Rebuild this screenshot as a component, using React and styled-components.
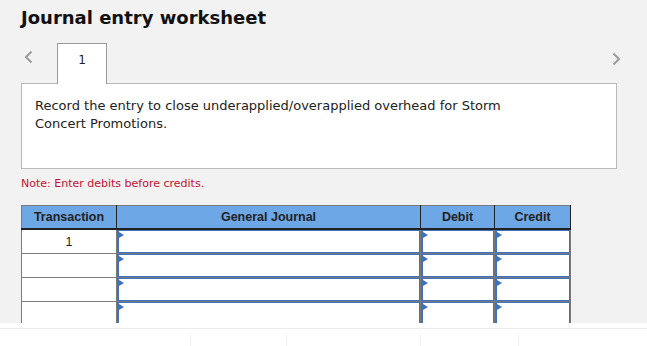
import React from "react";
import styled, { createGlobalStyle } from "styled-components";

const Global = createGlobalStyle`
  html, body { margin: 0; padding: 0; background: #ffffff; }
  body { font-family: "DejaVu Sans", Verdana, sans-serif; color: #222; }
`;

const Page = styled.div`
  width: 647px;
  height: 346px;
  display: flex;
  flex-direction: column;
  overflow: hidden;
`;

const Main = styled.div`
  height: 323px;
  flex: none;
  background: #f2f2f2;
  overflow: hidden;
`;

const Title = styled.h1`
  margin: 0;
  padding: 6px 0 0 21px;
  font-family: "DejaVu Sans", Verdana, sans-serif;
  font-weight: bold;
  font-size: 18px;
  line-height: 23px;
  color: #111;
`;

const TabRow = styled.div`
  display: flex;
  align-items: flex-start;
  margin-top: 14px;
  padding-left: 21px;
  position: relative;
  z-index: 1;
`;

const ArrowButton = styled.div`
  display: flex;
  align-items: flex-start;
  padding-top: ${(p) => p.$top}px;
  width: ${(p) => p.$width}px;
  padding-left: ${(p) => p.$left}px;
  box-sizing: border-box;
  margin-right: ${(p) => p.$right || 0}px;
`;

const Spacer = styled.div`
  flex: 1;
`;

const Tab = styled.div`
  width: 50px;
  height: 41px;
  box-sizing: border-box;
  border: 1px solid #9a9a9a;
  border-bottom: none;
  background: #fff;
  font-family: "DejaVu Sans", Verdana, sans-serif;
  font-size: 12px;
  text-align: center;
  padding-top: 9px;
  color: #222;
  margin-bottom: -1px;
`;

const Panel = styled.div`
  margin: 0 0 0 21px;
  width: 596px;
  height: 86px;
  box-sizing: border-box;
  border: 1px solid #b9b9b9;
  background: #fff;
  padding: 13px 0 0 13px;
`;

const Prompt = styled.p`
  margin: 0;
  max-width: 500px;
  font-family: "DejaVu Sans", Verdana, sans-serif;
  font-size: 13px;
  line-height: 18px;
  color: #222;
`;

const Note = styled.p`
  margin: 8px 0 0 21px;
  font-family: "DejaVu Sans", Verdana, sans-serif;
  font-size: 11px;
  line-height: 14px;
  color: #c8102e;
`;

const Table = styled.table`
  margin: 14px 0 0 21px;
  border-collapse: collapse;
  table-layout: fixed;
  width: 547px;
`;

const Th = styled.th`
  width: ${(p) => p.$w}px;
  height: 22px;
  padding: 0;
  background: #6ea7e6;
  border-top: 1px solid #7a7a7a;
  border-bottom: 2px solid #222;
  border-left: 1px solid ${(p) => (p.$first ? "#7a7a7a" : "#222")};
  border-right: 1px solid #222;
  font-family: "Liberation Sans", Arial, sans-serif;
  font-size: 12.5px;
  font-weight: bold;
  color: #222;
  text-align: center;
  vertical-align: middle;
`;

const Td = styled.td`
  height: 23px;
  padding: 0;
  border: 1px solid #7a7a7a;
  background: #fff;
  font-family: "Liberation Sans", Arial, sans-serif;
  font-size: 12.5px;
  color: #222;
  text-align: center;
  vertical-align: top;
`;

const TransText = styled.div`
  padding-top: 5px;
`;

const Input = styled.div`
  position: relative;
  height: 23px;
  box-sizing: border-box;
  border: 1px solid #3d72bf;
  border-left-width: 2px;
  background: #fff;
  &::before {
    content: "";
    position: absolute;
    top: 1px;
    left: 0;
    border-left: 5px solid #3d72bf;
    border-top: 3px solid transparent;
    border-bottom: 3px solid transparent;
  }
`;

const Footer = styled.div`
  flex: 1;
  background: #fff;
  padding-top: 5px;
`;

const FooterBar = styled.div`
  border-top: 1px solid #ededed;
  display: flex;
  height: 100%;
  padding-top: 5px;
  box-sizing: border-box;
`;

const FooterCell = styled.div`
  width: ${(p) => p.$w}px;
  flex: none;
  border-left: ${(p) => (p.$first ? "none" : "1px solid #eeeeee")};
  box-sizing: border-box;
`;

const Chevron = ({ dir }) => (
  <svg width="9" height="14" viewBox="0 0 9 14">
    <path
      d={dir === "left" ? "M7.5 1.5 L2 7 L7.5 12.5" : "M1.5 1.5 L7 7 L1.5 12.5"}
      fill="none"
      stroke="#9b9b9b"
      strokeWidth="2"
    />
  </svg>
);

const rows = ["1", "", "", ""];

export default function App() {
  return (
    <Page>
      <Global />
      <Main>
        <Title>Journal entry worksheet</Title>
        <TabRow>
          <ArrowButton $width={36} $left={3} $top={7}>
            <Chevron dir="left" />
          </ArrowButton>
          <Tab>1</Tab>
          <Spacer />
          <ArrowButton $width={9} $left={0} $top={9} $right={26}>
            <Chevron dir="right" />
          </ArrowButton>
        </TabRow>
        <Panel>
          <Prompt>
            Record the entry to close underapplied/overapplied overhead for Storm Concert Promotions.
          </Prompt>
        </Panel>
        <Note>Note: Enter debits before credits.</Note>
        <Table>
          <thead>
            <tr>
              <Th $w={94} $first>Transaction</Th>
              <Th $w={303}>General Journal</Th>
              <Th $w={73}>Debit</Th>
              <Th $w={75}>Credit</Th>
            </tr>
          </thead>
          <tbody>
            {rows.map((r, i) => (
              <tr key={i}>
                <Td>
                  <TransText>{r}</TransText>
                </Td>
                <Td>
                  <Input />
                </Td>
                <Td>
                  <Input />
                </Td>
                <Td>
                  <Input />
                </Td>
              </tr>
            ))}
          </tbody>
        </Table>
      </Main>
      <Footer>
        <FooterBar>
          <FooterCell $w={190} $first />
          <FooterCell $w={96} />
          <FooterCell $w={134} />
          <FooterCell $w={98} />
          <FooterCell $w={129} />
        </FooterBar>
      </Footer>
    </Page>
  );
}
